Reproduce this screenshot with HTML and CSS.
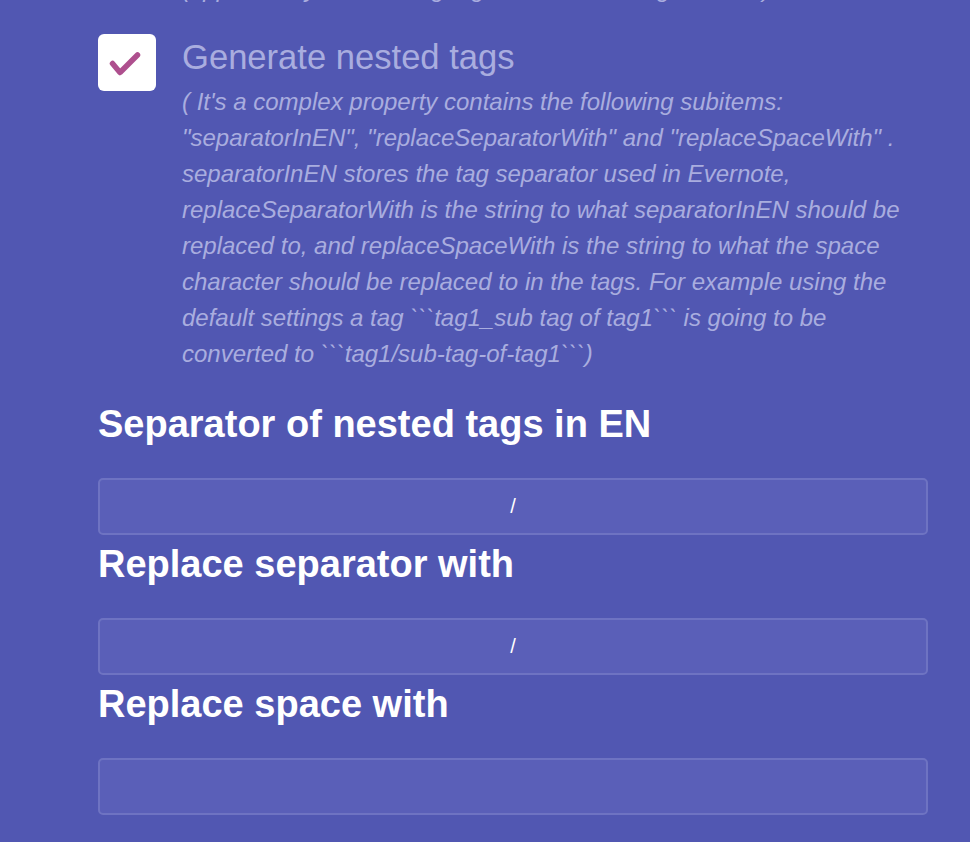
FILE: index.html
```html
<!DOCTYPE html>
<html lang="en">
<head>
<meta charset="utf-8">
<title>Settings</title>
<link rel="stylesheet" href="styles.css">
</head>
<body>
<main class="settings">
  <p class="desc desc-prev">(applies only when using tags with the nesting enabled)</p>

  <div class="option">
    <label class="checkbox" aria-label="Generate nested tags">
      <svg viewBox="0 0 58 57" width="58" height="57" aria-hidden="true">
        <path d="M14.5 29.5 L22 38.5 L39.5 21" fill="none" stroke="#ae4f8e" stroke-width="5.5" stroke-linecap="round" stroke-linejoin="round"/>
      </svg>
    </label>
    <div class="option-text">
      <div class="option-label">Generate nested tags</div>
      <p class="desc">( It's a complex property contains the following subitems: "separatorInEN", "replaceSeparatorWith" and "replaceSpaceWith" . separatorInEN stores the tag separator used in Evernote, replaceSeparatorWith is the string to what separatorInEN should be replaced to, and replaceSpaceWith is the string to what the space character should be replaced to in the tags. For example using the default settings a tag ```tag1_sub tag of tag1``` is going to be converted to ```tag1/sub-tag-of-tag1```)</p>
    </div>
  </div>

  <h3 class="field-title first">Separator of nested tags in EN</h3>
  <input class="field" type="text" value="/">

  <h3 class="field-title">Replace separator with</h3>
  <input class="field" type="text" value="/">

  <h3 class="field-title">Replace space with</h3>
  <input class="field" type="text" value="">
</main>
</body>
</html>
```

FILE: styles.css
```css
html, body {
  margin: 0;
  padding: 0;
  background: #5157b2;
  height: 100%;
  overflow: hidden;
}

body {
  font-family: "Liberation Sans", Arial, Helvetica, sans-serif;
  color: #ffffff;
}

.settings {
  padding: 0 42px 0 98px;
  margin-top: -29px;
}

.desc {
  margin: 0;
  font-style: italic;
  font-size: 24px;
  line-height: 36px;
  color: #a9addf;
}

.desc-prev {
  padding-left: 84px;
  white-space: nowrap;
  overflow: hidden;
}

.option {
  display: flex;
  align-items: flex-start;
  gap: 26px;
  margin-top: 27px;
}

.checkbox {
  flex: 0 0 58px;
  width: 58px;
  height: 57px;
  background: #ffffff;
  border-radius: 6px;
  display: block;
}

.checkbox svg {
  display: block;
}

.option-text {
  flex: 1;
  margin-top: 4px;
}

.option-label {
  font-size: 34.6px;
  line-height: 39px;
  color: #a9addf;
  margin-bottom: 7px;
}

.field-title {
  margin: 7px 0 32px;
  font-size: 38px;
  line-height: 44px;
  font-weight: bold;
  color: #ffffff;
}

.field-title.first {
  margin-top: 30px;
}

.field {
  display: block;
  box-sizing: border-box;
  width: 100%;
  height: 57px;
  margin: 0;
  padding: 0 12px;
  background: #5a5fb8;
  border: 2px solid #6e73c2;
  border-radius: 5px;
  color: #ffffff;
  font-family: "Liberation Sans", Arial, Helvetica, sans-serif;
  font-size: 20px;
  text-align: center;
  outline: none;
}
```
